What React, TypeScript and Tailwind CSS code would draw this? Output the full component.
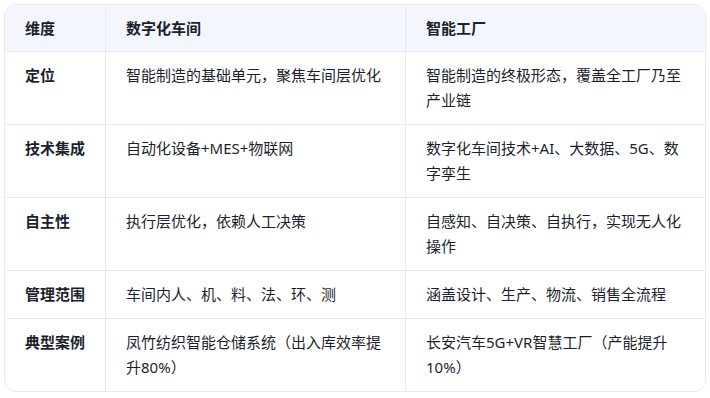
const rows = [
  ["定位", "智能制造的基础单元，聚焦车间层优化", "智能制造的终极形态，覆盖全工厂乃至产业链"],
  ["技术集成", "自动化设备+MES+物联网", "数字化车间技术+AI、大数据、5G、数字孪生"],
  ["自主性", "执行层优化，依赖人工决策", "自感知、自决策、自执行，实现无人化操作"],
  ["管理范围", "车间内人、机、料、法、环、测", "涵盖设计、生产、物流、销售全流程"],
  ["典型案例", "凤竹纺织智能仓储系统（出入库效率提升80%）", "长安汽车5G+VR智慧工厂（产能提升10%）"],
];

export default function App() {
  return (
    <div className="bg-white p-1 text-[15px] leading-[25px] text-[#1c1f2e] [font-family:'Noto_Sans','Noto_Sans_CJK_SC',sans-serif]">
      <div className="w-[702px] overflow-hidden rounded-xl border border-[#e9eaf1]">
        <div className="grid grid-cols-[101px_300px_1fr]">
          {/* header */}
          <div className="flex h-[47px] items-center border-b border-r border-[#e9eaf1] bg-[#f4f6fe] px-5 font-bold">维度</div>
          <div className="flex h-[47px] items-center border-b border-r border-[#e9eaf1] bg-[#f4f6fe] px-5 font-bold">数字化车间</div>
          <div className="flex h-[47px] items-center border-b border-[#e9eaf1] bg-[#f4f6fe] px-5 font-bold">智能工厂</div>

          {rows.map((r, i) => {
            const last = i === rows.length - 1;
            const b = last ? "" : "border-b";
            return (
              <div key={i} className="contents">
                <div className={`${b} border-r border-[#e9eaf1] px-5 py-[11px] font-bold`}>{r[0]}</div>
                <div className={`${b} border-r border-[#e9eaf1] px-5 py-[11px]`}>{r[1]}</div>
                <div className={`${b} border-[#e9eaf1] px-5 py-[11px]`}>{r[2]}</div>
              </div>
            );
          })}
        </div>
      </div>
    </div>
  );
}
